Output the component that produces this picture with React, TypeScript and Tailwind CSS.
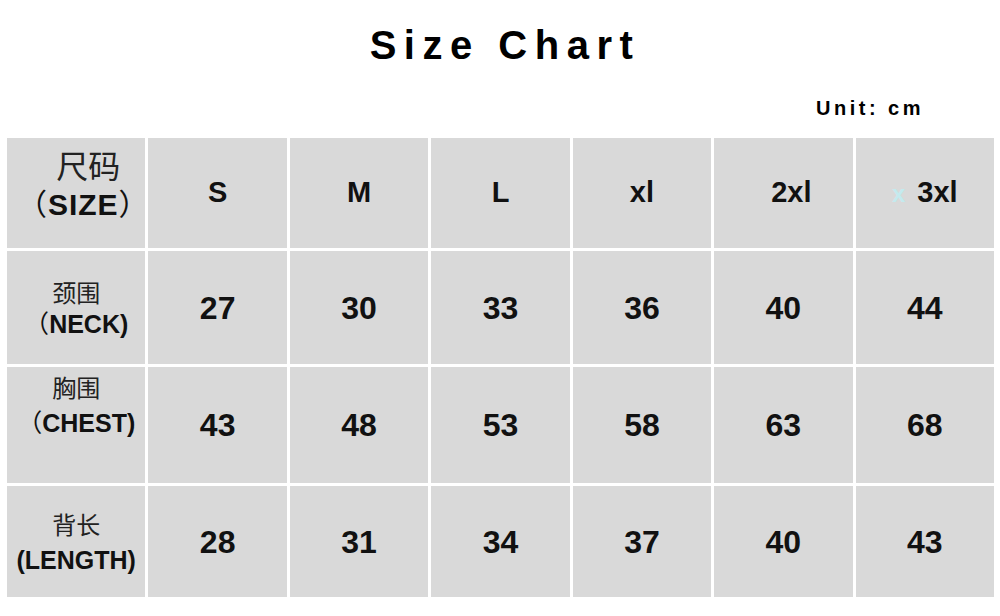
const sizes = ["S", "M", "L", "xl", "2xl", "3xl"]

const rows = [
  { cn: "颈围", en: "（NECK)", values: [27, 30, 33, 36, 40, 44], h: "h-[113px]", box: "pt-0", mt: "mt-[4px]" },
  { cn: "胸围", en: "（CHEST)", values: [43, 48, 53, 58, 63, 68], h: "h-[116px]", box: "pb-[40px]", mt: "mt-[8px]" },
  { cn: "背长", en: "(LENGTH)", values: [28, 31, 34, 37, 40, 43], h: "h-[111px]", box: "pt-0", mt: "mt-[10px]" },
]

const cjk = { fontFamily: '"Noto Sans CJK SC", "Liberation Serif", serif' }
const latin = { fontFamily: '"Liberation Sans", Arial, sans-serif' }

export default function App() {
  return (
    <div className="w-[1000px] h-[616px] bg-white overflow-hidden text-[#111]" style={latin}>
      {/* title */}
      <div className="pt-[25px] pl-[10px] flex justify-center">
        <h1 className="text-[40px] leading-[40px] font-bold tracking-[7.5px] text-black">Size Chart</h1>
      </div>
      <div className="mt-[33px] flex justify-end pr-[76px]">
        <span className="text-[20px] leading-[20px] font-bold tracking-[3.5px] text-black">Unit: cm</span>
      </div>

      {/* table */}
      <div className="mt-[20px] ml-[7px] w-[987px] grid grid-cols-7 gap-x-[3px] gap-y-[3px]">
        {/* header row */}
        <div className="h-[110px] bg-[#d9d9d9] flex flex-col items-center justify-center pb-[18px]">
          <span className="text-[32px] leading-[34px] text-[#222] ml-[24px]" style={cjk}>
            尺码
          </span>
          <span className="text-[30px] leading-[34px] font-bold mt-[4px] ml-[14px] tracking-[1px]">
            <span className="font-normal" style={cjk}>（</span>SIZE<span className="font-normal" style={cjk}>）</span>
          </span>
        </div>
        {sizes.map((s) => (
          <div
            key={s}
            className={
              s === "2xl"
                ? "h-[110px] bg-[#d9d9d9] flex items-center justify-center pl-[16px]"
                : "h-[110px] bg-[#d9d9d9] flex items-center justify-center"
            }
          >
            <span className="text-[29px] font-bold">
              {s === "3xl" ? (
                <>
                  <span className="text-[#c4eaee] font-bold text-[24px] mr-[12px]">x</span>3xl
                </>
              ) : (
                s
              )}
            </span>
          </div>
        ))}

        {/* data rows */}
        {rows.map((r) => (
          <>
            <div
              key={r.cn}
              className={`${r.h} bg-[#d9d9d9] flex flex-col items-center justify-center ${r.box}`}
            >
              <span className="text-[24px] leading-[26px] text-[#222]" style={cjk}>
                {r.cn}
              </span>
              <span className={`text-[25px] leading-[26px] font-bold ${r.mt}`}>
                {r.en.startsWith("（") ? (
                  <>
                    <span className="font-normal" style={cjk}>（</span>
                    {r.en.slice(1)}
                  </>
                ) : (
                  r.en
                )}
              </span>
            </div>
            {r.values.map((v, i) => (
              <div key={r.cn + i} className={`${r.h} bg-[#d9d9d9] flex items-center justify-center`}>
                <span className="text-[32px] font-bold">{v}</span>
              </div>
            ))}
          </>
        ))}
      </div>
    </div>
  )
}
